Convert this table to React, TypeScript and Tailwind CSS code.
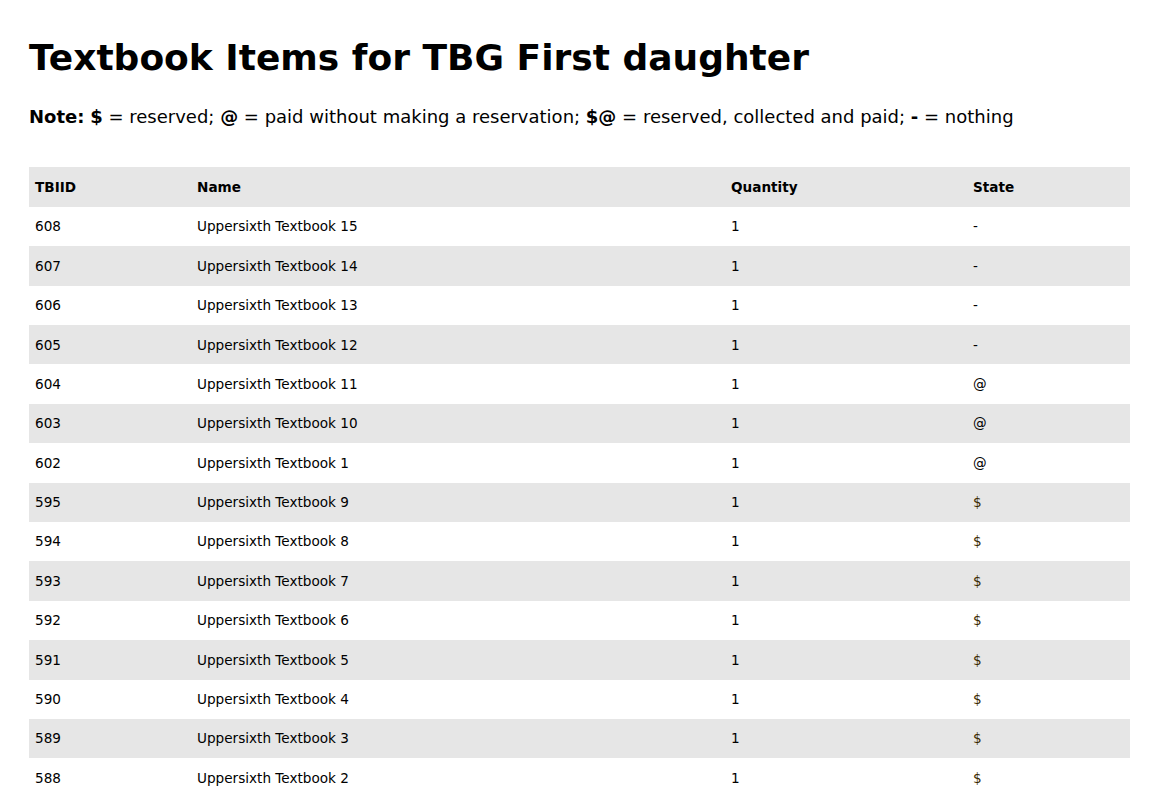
const rows: [string, string, string][] = [
  ['608', 'Uppersixth Textbook 15', '-'],
  ['607', 'Uppersixth Textbook 14', '-'],
  ['606', 'Uppersixth Textbook 13', '-'],
  ['605', 'Uppersixth Textbook 12', '-'],
  ['604', 'Uppersixth Textbook 11', '@'],
  ['603', 'Uppersixth Textbook 10', '@'],
  ['602', 'Uppersixth Textbook 1', '@'],
  ['595', 'Uppersixth Textbook 9', '$'],
  ['594', 'Uppersixth Textbook 8', '$'],
  ['593', 'Uppersixth Textbook 7', '$'],
  ['592', 'Uppersixth Textbook 6', '$'],
  ['591', 'Uppersixth Textbook 5', '$'],
  ['590', 'Uppersixth Textbook 4', '$'],
  ['589', 'Uppersixth Textbook 3', '$'],
  ['588', 'Uppersixth Textbook 2', '$'],
];

export default function App() {
  return (
    <div className="min-h-screen bg-white px-[29px] pt-[37px] pb-8 text-black [font-family:'DejaVu_Sans',sans-serif]">
      <h1 className="text-[36px] font-bold leading-[1.164]">Textbook Items for TBG First daughter</h1>
      <p className="mt-[28px] text-[18px] leading-[1.164]">
        <b>Note:</b> <b>$</b> = reserved; <b>@</b> = paid without making a reservation; <b>$@</b> = reserved,
        collected and paid; <b>-</b> = nothing
      </p>
      <table className="mt-[39px] w-[1101px] table-fixed border-collapse text-[13.6px]">
        <colgroup>
          <col className="w-[162px]" />
          <col className="w-[534px]" />
          <col className="w-[242px]" />
          <col className="w-[163px]" />
        </colgroup>
        <thead>
          <tr className="h-[40px] bg-[#e6e6e6] text-left">
            <th className="px-[6px] font-bold">TBIID</th>
            <th className="px-[6px] font-bold">Name</th>
            <th className="px-[6px] font-bold">Quantity</th>
            <th className="px-[6px] font-bold">State</th>
          </tr>
        </thead>
        <tbody>
          {rows.map(([id, name, state], i) => (
            <tr key={id} className={i % 2 === 1 ? 'h-[39.4px] bg-[#e6e6e6]' : 'h-[39.4px] bg-white'}>
              <td className="px-[6px]">{id}</td>
              <td className="px-[6px]">{name}</td>
              <td className="px-[6px]">1</td>
              <td className={state === '$' ? 'px-[6px] text-[#3a2a00]' : 'px-[6px]'}>{state}</td>
            </tr>
          ))}
        </tbody>
      </table>
    </div>
  );
}
